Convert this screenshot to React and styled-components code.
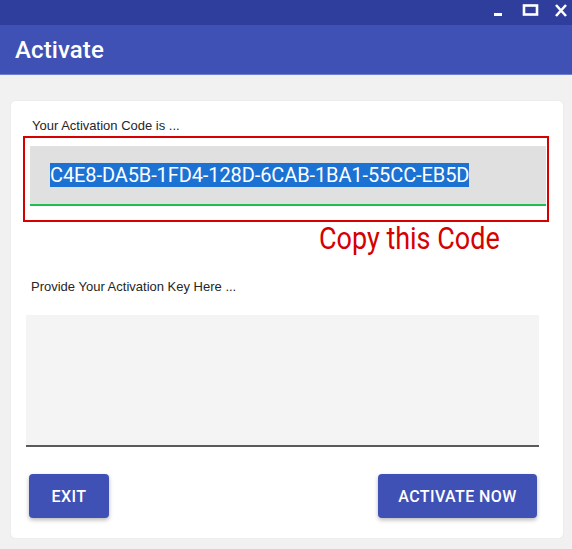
import React from "react";
import styled, { createGlobalStyle } from "styled-components";

const Global = createGlobalStyle`
  html, body { margin: 0; padding: 0; background: #f1f1f1; }
  body { font-family: Roboto, "Liberation Sans", Arial, sans-serif; }
  * { box-sizing: border-box; }
`;

const Window = styled.div`
  width: 572px;
  height: 549px;
  display: flex;
  flex-direction: column;
  background: #f1f1f1;
  overflow: hidden;
`;

const TitleBar = styled.div`
  height: 25px;
  background: #2f3d9c;
  display: flex;
  justify-content: flex-end;
  align-items: flex-start;
`;

const WinButton = styled.div`
  width: ${(p) => p.$w}px;
  height: 20px;
  margin-right: ${(p) => p.$mr}px;
  display: flex;
  align-items: flex-start;
  justify-content: center;
  padding-top: 4px;
`;

const Header = styled.div`
  height: 50px;
  background: #3f51b5;
  border-bottom: 1px solid #6f7fd0;
  display: flex;
  align-items: center;
  padding-left: 15px;
`;

const Title = styled.h1`
  margin: 0;
  color: #fff;
  font-family: Roboto, sans-serif;
  font-weight: 500;
  font-size: 24px;
  letter-spacing: 0.1px;
`;

const Body = styled.div`
  flex: 1;
  padding: 26px 9px 11px 11px;
  display: flex;
`;

const Card = styled.div`
  flex: 1;
  background: #fff;
  border-radius: 4px;
  box-shadow: 0 0 1px rgba(0, 0, 0, 0.18);
  padding: 17px 0 0 0;
  display: flex;
  flex-direction: column;
`;

const Label = styled.div`
  font-family: "Liberation Sans", Arial, sans-serif;
  font-size: 13px;
  line-height: 15px;
  color: #262626;
  margin-left: ${(p) => p.$ml}px;
  margin-top: ${(p) => p.$mt || 0}px;
`;

const Highlight = styled.div`
  margin: 3px 0 0 12px;
  width: 526px;
  height: 86px;
  border: 2px solid #d50000;
  padding: 8px 1px 0 5px;
`;

const CodeField = styled.div`
  height: 60px;
  background: #e0e0e0;
  border-bottom: 2px solid #1fbf4f;
  display: flex;
  align-items: center;
  padding-left: 20px;
`;

const Selected = styled.span`
  font-family: Roboto, sans-serif;
  font-size: 20px;
  line-height: 24px;
  color: #fff;
  background: #1c72d3;
  letter-spacing: -0.1px;
`;

const Note = styled.div`
  margin-left: 308px;
  font-family: Roboto, sans-serif;
  font-size: 31px;
  line-height: 34px;
  color: #d50000;
  transform: scaleX(0.87);
  transform-origin: left center;
  white-space: nowrap;
`;

const KeyArea = styled.textarea`
  margin: 21px 0 0 15px;
  width: 513px;
  height: 132px;
  border: none;
  border-bottom: 2px solid #5a5a5a;
  background: #f4f4f4;
  resize: none;
  outline: none;
  font-family: Roboto, sans-serif;
  font-size: 14px;
  padding: 8px;
`;

const Actions = styled.div`
  margin: 27px 26px 0 18px;
  display: flex;
  justify-content: space-between;
`;

const Button = styled.button`
  width: ${(p) => p.$w}px;
  height: 44px;
  border: none;
  border-radius: 4px;
  background: #3f51b5;
  color: #fff;
  font-family: Roboto, sans-serif;
  font-weight: 500;
  font-size: 16px;
  letter-spacing: 0.4px;
  box-shadow: 0 2px 4px rgba(0, 0, 0, 0.28);
  cursor: pointer;
  padding: 0;
`;

export default function App() {
  return (
    <>
      <Global />
      <Window>
        <TitleBar>
          <WinButton $w={10} $mr={19}>
            <svg width="10" height="16" viewBox="0 0 10 16">
              <rect x="1" y="9" width="8" height="3" fill="#fff" />
            </svg>
          </WinButton>
          <WinButton $w={18} $mr={14}>
            <svg width="18" height="12" viewBox="0 0 18 12">
              <rect x="2" y="1.5" width="13" height="9" fill="none" stroke="#fff" strokeWidth="2.6" />
            </svg>
          </WinButton>
          <WinButton $w={14} $mr={4}>
            <svg width="14" height="13" viewBox="0 0 14 13">
              <path d="M2 1 L12 12 M12 1 L2 12" stroke="#fff" strokeWidth="2.6" />
            </svg>
          </WinButton>
        </TitleBar>
        <Header>
          <Title>Activate</Title>
        </Header>
        <Body>
          <Card>
            <Label $ml={21}>Your Activation Code is ...</Label>
            <Highlight>
              <CodeField>
                <Selected>C4E8-DA5B-1FD4-128D-6CAB-1BA1-55CC-EB5D</Selected>
              </CodeField>
            </Highlight>
            <Note>Copy this Code</Note>
            <Label $ml={20} $mt={23}>Provide Your Activation Key Here ...</Label>
            <KeyArea />
            <Actions>
              <Button $w={80}>EXIT</Button>
              <Button $w={159}>ACTIVATE NOW</Button>
            </Actions>
          </Card>
        </Body>
      </Window>
    </>
  );
}
